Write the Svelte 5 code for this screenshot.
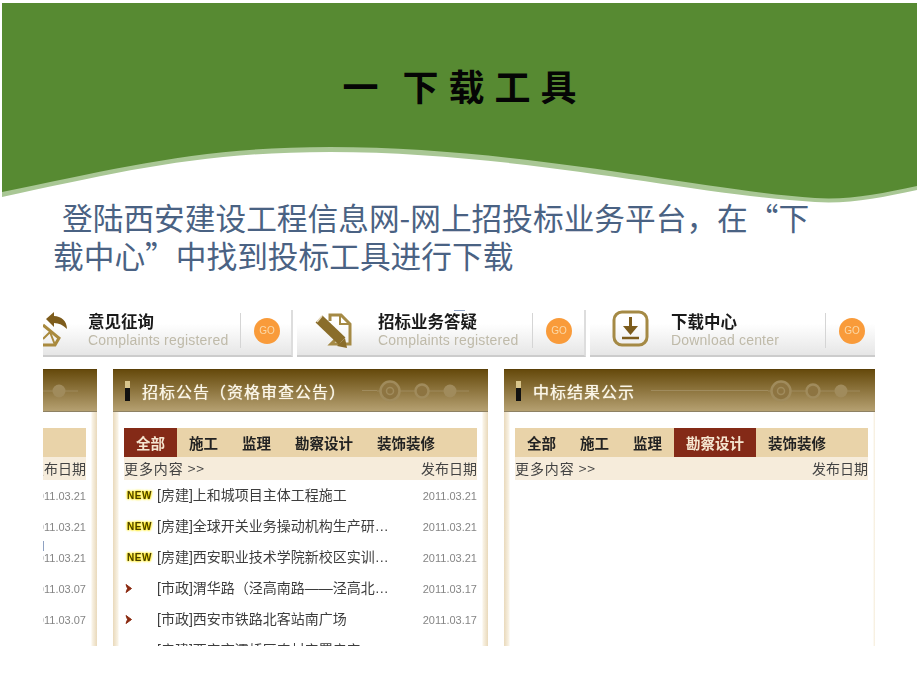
<script>
  const tiles = [
    { title: "意见征询", sub: "Complaints registered", icon: "opinion" },
    { title: "招标业务答疑", sub: "Complaints registered", icon: "answer" },
    { title: "下载中心", sub: "Download center", icon: "download" }
  ];

  const tabs = ["全部", "施工", "监理", "勘察设计", "装饰装修"];

  const notices = [
    { text: "[房建]上和城项目主体工程施工", date: "2011.03.21", isNew: true },
    { text: "[房建]全球开关业务操动机构生产研…", date: "2011.03.21", isNew: true },
    { text: "[房建]西安职业技术学院新校区实训…", date: "2011.03.21", isNew: true },
    { text: "[市政]渭华路（泾高南路——泾高北…", date: "2011.03.17", isNew: false },
    { text: "[市政]西安市铁路北客站南广场", date: "2011.03.17", isNew: false },
    { text: "[房建]西安市灞桥区农村安置房安…", date: "2011.03.17", isNew: false }
  ];

  // the left panel is cut off by the screenshot, only its date column shows
  const oldNotices = ["03.21", "03.21", "03.21", "03.07", "03.07"].map((d) => ({
    text: "",
    date: "2011." + d,
    isNew: false,
    hideFlag: true
  }));

  const panels = [
    { title: "", tabs: [], active: -1, more: "", rows: oldNotices },
    { title: "招标公告（资格审查公告）", tabs, active: 0, more: "更多内容 >>", rows: notices },
    { title: "中标结果公示", tabs, active: 3, more: "更多内容 >>", rows: [] }
  ];
</script>

<div class="slide" lang="zh-CN">
  <header class="banner">
    <svg class="wave" viewBox="0 0 920 210" aria-hidden="true">
      <path
        d="M2 3H917V190C880 198 850 204 815 202C700 196 520 152 330 152C200 152 120 172 2 197Z"
        fill="#a9c795"
      />
      <path
        d="M2 3H917V186C880 194 850 200 815 198C700 190 520 147 330 147C200 147 120 168 2 192Z"
        fill="#578a32"
      />
    </svg>
    <h1>一 下载工具</h1>
  </header>

  <p class="intro">登陆西安建设工程信息网-网上招投标业务平台，在“下载中心”中找到投标工具进行下载</p>

  <section class="shot">
    <i class="speck speck-top"></i>
    <i class="speck speck-left"></i>

    <div class="tiles">
      {#each tiles as tile}
        <div class="tile">
          <div class="icon">
            {#if tile.icon === "opinion"}
              <svg viewBox="23 310 46 47" width="46" height="47">
                <path d="M46 320L54 313V317C61 317 67 322 67 330C63 326 59 324 54 324V328Z" fill="#7d5c1c" />
                <path d="M43 326L59 339L55 346H43" fill="none" stroke="#a98a3e" stroke-width="3" />
                <path d="M43 340L50 333L55 346" fill="none" stroke="#a98a3e" stroke-width="2" />
              </svg>
            {:else if tile.icon === "answer"}
              <svg viewBox="315 310 46 47" width="46" height="47">
                <path d="M330 322V316H341L350 325V345H331L336 340" fill="none" stroke="#a58a45" stroke-width="3" />
                <path d="M340 315V325H350" fill="none" stroke="#a58a45" stroke-width="2" />
                <path d="M319 320L342 342" stroke="#8a6d2a" stroke-width="10" />
                <path d="M322 317L317 323" stroke="#e8dcc0" stroke-width="1.5" />
                <path d="M337 347L347 349L345 339Z" fill="#8a6d2a" />
              </svg>
            {:else}
              <svg viewBox="608 310 46 47" width="46" height="47">
                <rect x="614" y="313" width="33" height="33" rx="8" fill="none" stroke="#a58a45" stroke-width="3" />
                <path d="M630.5 318V332" stroke="#7d5c1c" stroke-width="3" />
                <path d="M623 327H638L630.5 336Z" fill="#7d5c1c" />
                <path d="M622 339H639" stroke="#7d5c1c" stroke-width="2.5" />
              </svg>
            {/if}
          </div>
          <div class="label">
            <strong>{tile.title}</strong>
            <span>{tile.sub}</span>
          </div>
          <i class="divider"></i>
          <span class="go">GO</span>
        </div>
      {/each}
    </div>

    <div class="panels">
      {#each panels as panel}
        <article class="panel">
          <div class="panel-head">
            <i class="mark"></i>
            <h2>{panel.title}</h2>
            <i class="rule"></i>
            <svg class="rings" viewBox="0 0 100 30" width="100" height="30" aria-hidden="true">
              <path d="M0 15H92" stroke="#fff" stroke-opacity="0.16" />
              <circle cx="13" cy="15" r="9.5" fill="#8d7441" stroke="#a08b5c" stroke-width="2.5" />
              <circle cx="13" cy="15" r="3.5" fill="none" stroke="#a08b5c" stroke-width="1.5" />
              <circle cx="45" cy="15" r="6.5" fill="#8d7441" stroke="#a08b5c" stroke-width="2.5" />
              <circle cx="73" cy="15" r="6.5" fill="#a08b5c" />
            </svg>
          </div>
          <div class="panel-body">
            <div class="tabs">
              {#each panel.tabs as tab, i}
                <span class="tab" class:active={i === panel.active}>{tab}</span>
              {/each}
            </div>
            <div class="more">
              <span class="more-link">{panel.more}</span>
              <span>发布日期</span>
            </div>
            <ul>
              {#each panel.rows as row}
                <li>
                  <span class="flag">
                    {#if row.isNew}
                      <b class="new">NEW</b>
                    {:else if !row.hideFlag}
                      <svg viewBox="0 0 7 9" width="7" height="9" aria-hidden="true">
                        <path d="M1 0.5L6.5 4.5L1 8.5L2.5 4.5Z" fill="#8a2a10" stroke="#8a2a10" />
                      </svg>
                    {/if}
                  </span>
                  <span class="name">{row.text}</span>
                  <time>{row.date}</time>
                </li>
              {/each}
            </ul>
          </div>
        </article>
      {/each}
    </div>
  </section>
</div>

<style>
  :global(body) {
    background: #fff;
  }

  .slide {
    width: 920px;
    height: 690px;
    overflow: hidden;
    font-family: "Noto Sans CJK SC", "Liberation Sans", sans-serif;
  }

  .banner {
    position: relative;
    height: 198px;
    padding: 62px 0 0 9px;
    box-sizing: border-box;
  }

  .wave {
    position: absolute;
    top: 0;
    left: 0;
    width: 920px;
    height: 210px;
  }

  h1 {
    position: relative;
    margin: 0;
    text-align: center;
    font-size: 36px;
    line-height: 46px;
    font-weight: 700;
    letter-spacing: 10px;
    word-spacing: -4px;
    color: #050505;
  }

  .intro {
    position: relative;
    width: 770px;
    margin: 0 0 0 53px;
    font-size: 30.7px;
    line-height: 38px;
    text-indent: 9px;
    font-weight: 400;
    color: #4a6283;
  }

  .shot {
    position: relative;
    height: 336px;
    margin: 36px 45px 0 43px;
    overflow: hidden;
    filter: blur(0.45px);
  }

  .speck {
    position: absolute;
    background: #8fa2c2;
  }

  .speck-top {
    top: 0;
    left: 411px;
    width: 11px;
    height: 1px;
  }

  .speck-left {
    top: 231px;
    left: 0;
    width: 1px;
    height: 10px;
  }

  .tiles {
    display: flex;
    gap: 4px;
    height: 47px;
    margin-left: -38px;
  }

  .tile {
    display: flex;
    flex: none;
    align-items: center;
    width: 289px;
    height: 47px;
    box-sizing: border-box;
    padding-left: 18px;
    background: linear-gradient(#fff 30%, #e6e6e6);
    border-right: 2px solid #ddd;
    border-bottom: 2px solid #ccc;
  }

  .tile:first-child {
    width: 288px;
  }

  .tile:first-child .label {
    width: 152px;
    margin-left: 2px;
  }

  .tile:last-child {
    width: 300px;
    border-right: 0;
  }

  .icon {
    flex: none;
    width: 46px;
    height: 47px;
    margin-right: 17px;
  }

  .icon svg {
    display: block;
  }

  .label {
    display: flex;
    flex: none;
    flex-direction: column;
    gap: 2px;
    width: 154px;
    padding-bottom: 5px;
  }

  .label strong {
    font-size: 16.5px;
    line-height: 18px;
    font-weight: 700;
    color: #1a1a1a;
    white-space: nowrap;
  }

  .label span {
    font-family: "Liberation Sans", sans-serif;
    font-size: 14px;
    line-height: 17px;
    letter-spacing: 0.2px;
    color: #bfbaa9;
    white-space: nowrap;
  }

  .divider {
    flex: none;
    width: 1px;
    height: 35px;
    margin-bottom: 4px;
    background: #d5d5d5;
  }

  .go {
    flex: none;
    width: 26px;
    height: 26px;
    margin: 0 0 4px 13px;
    border-radius: 50%;
    background: #f99b3a;
    color: #fbd9a8;
    font-family: "Liberation Sans", sans-serif;
    font-size: 10px;
    line-height: 26px;
    text-align: center;
  }

  .panels {
    display: flex;
    gap: 16px;
    margin: 12px 0 0 -321px;
  }

  .panel {
    flex: none;
    width: 375px;
  }

  .panel-head {
    display: flex;
    align-items: center;
    height: 43px;
    box-sizing: border-box;
    padding: 0 11px 0 10px;
    background: linear-gradient(#664a0c, #b5a071);
    border-top: 1px solid #5a4008;
    border-bottom: 1px solid #8e8163;
  }

  .mark {
    flex: none;
    width: 5px;
    height: 20px;
    margin: 0 12px 0 2px;
    background: linear-gradient(#d8c58c 35%, #111 35%);
  }

  h2 {
    flex: none;
    margin: 0;
    font-size: 16px;
    font-weight: 400;
    letter-spacing: 1px;
    color: #fbf6e8;
    text-shadow: 0 0 1px #fbf6e8;
  }

  .rule {
    flex: 1;
    height: 1px;
    margin-left: 16px;
    background: rgba(255, 255, 255, 0.16);
  }

  .rings {
    flex: none;
  }

  .panel-body {
    height: 300px;
    box-sizing: border-box;
    padding: 16px 11px 0;
    background: linear-gradient(90deg, #e9d9bb, #f9f3e6 5px, #fff 6px, #fff calc(100% - 6px), #f9f3e6 calc(100% - 5px), #e9d9bb);
  }

  .tabs {
    display: flex;
    height: 29px;
    background: #e9d3a9;
  }

  .tab {
    padding: 0 12px;
    font-size: 14.5px;
    line-height: 29px;
    font-weight: 700;
    color: #222;
  }

  .tab.active {
    background: #842a17;
    color: #f5e6d0;
  }

  .more {
    display: flex;
    justify-content: space-between;
    height: 23px;
    background: #f6ecdb;
    font-size: 14px;
    line-height: 23px;
    color: #444;
  }

  .more-link {
    letter-spacing: 0.9px;
  }

  ul {
    margin: 0;
    padding: 0;
    list-style: none;
  }

  li {
    display: flex;
    align-items: center;
    height: 31px;
  }

  .flag {
    display: flex;
    flex: none;
    align-items: center;
    width: 33px;
    padding-left: 3px;
    box-sizing: border-box;
  }

  .flag svg {
    margin-left: -2px;
  }

  .new {
    font-family: "Liberation Sans", sans-serif;
    font-size: 10px;
    line-height: 10px;
    font-weight: 700;
    letter-spacing: 0.6px;
    color: #4a4000;
    text-shadow: 0 0 2px #ffe600, 0 0 2px #ffe600, 0 0 3px #ffe600;
  }

  .name {
    flex: 1;
    font-family: "Liberation Sans", "Noto Sans CJK SC", sans-serif;
    font-size: 14px;
    line-height: 31px;
    color: #3d3d3d;
    white-space: nowrap;
    overflow: hidden;
  }

  time {
    flex: none;
    font-family: "Liberation Sans", sans-serif;
    font-size: 11px;
    color: #858585;
  }
</style>
